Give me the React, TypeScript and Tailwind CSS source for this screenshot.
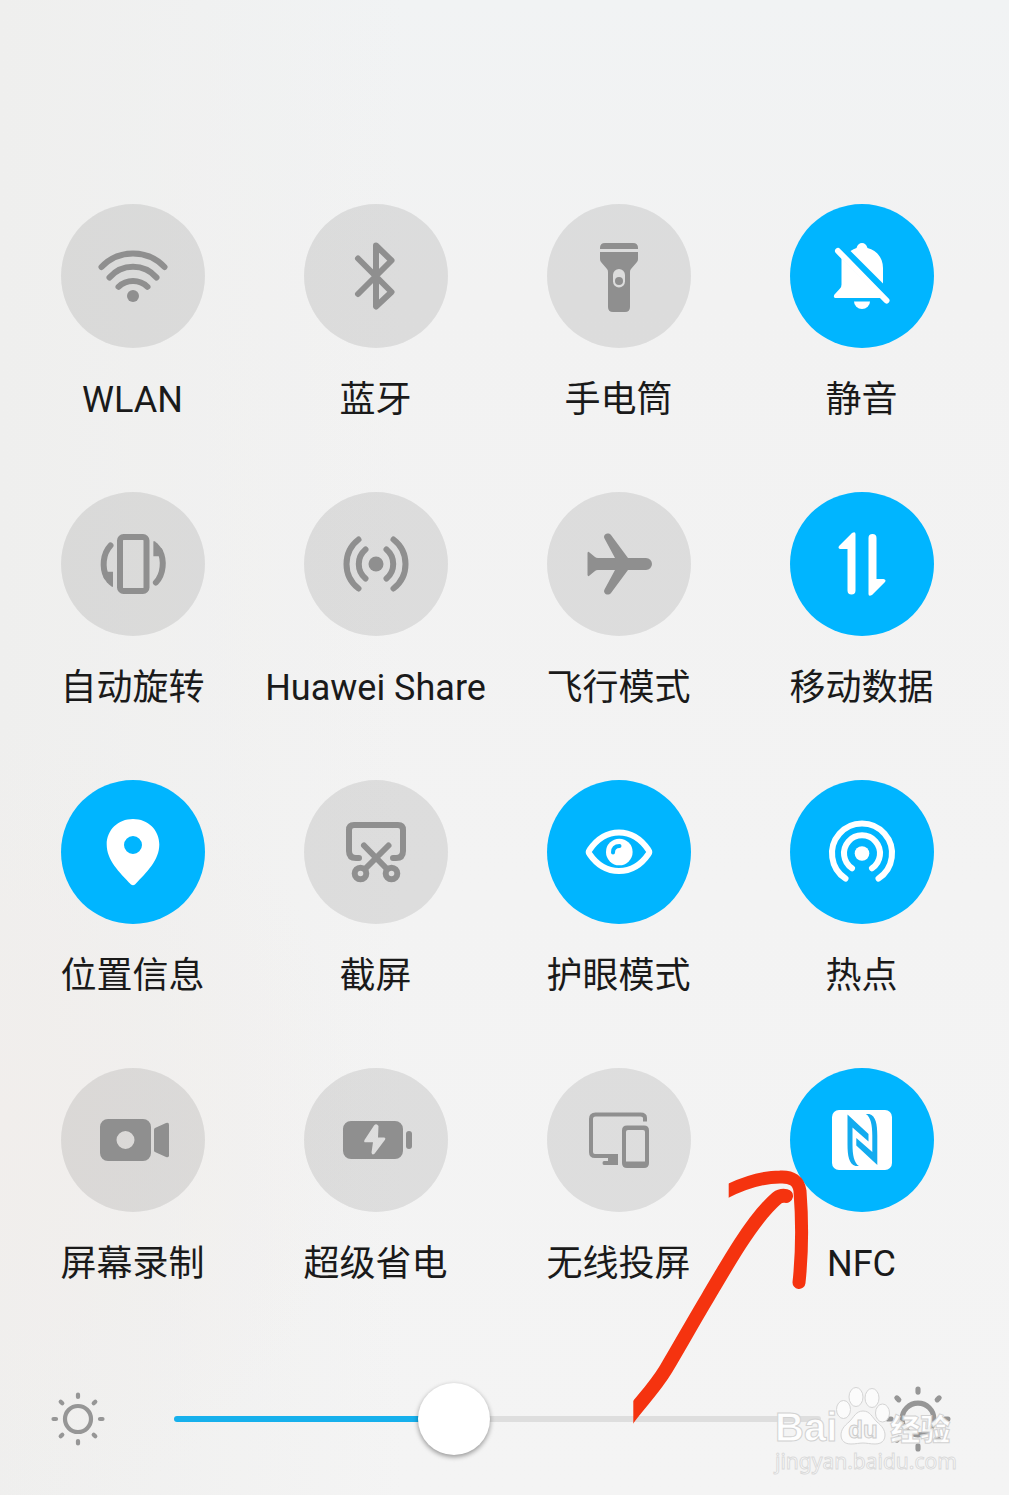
import React, { useState } from "react";

interface Tile {
  label: string;
  active?: boolean;
  icon: React.ReactNode;
}

const strokeProps = {
  fill: "none",
  stroke: "currentColor",
  strokeWidth: 6,
  strokeLinecap: "round" as const,
  strokeLinejoin: "round" as const,
};

// All icons are drawn on the same 144x144 canvas as the round button
const initialTiles: Tile[] = [
  {
    label: "WLAN",
    icon: (
      <>
        <g {...strokeProps}>
          <path d="M40.5 63a43.5 43.5 0 0 1 63 0" />
          <path d="M48.5 73.5a31 31 0 0 1 47 0" />
          <path d="M57.5 82.8a21 21 0 0 1 29 0" />
        </g>
        <circle cx="72" cy="92" r="6" />
      </>
    ),
  },
  {
    label: "蓝牙",
    icon: <path {...strokeProps} d="M54 54.5 87.5 88 72 102.5V41.5L87.5 56.5 54 90" />,
  },
  {
    label: "手电筒",
    icon: (
      <>
        <path d="M58 39h28q5 0 5 5v1H53v-1q0-5 5-5z" />
        <path
          fillRule="evenodd"
          d="M53 48h38v7q0 2-1 3l-6 7q-1 1-1 3v35q0 5-5 5H66q-5 0-5-5V68q0-2-1-3l-6-7q-1-1-1-3zM72 65a6 6 0 0 0-6 6v6.5a6 6 0 0 0 12 0V71a6 6 0 0 0-6-6z"
        />
        <circle cx="72" cy="77" r="4" />
      </>
    ),
  },
  {
    label: "静音",
    active: true,
    icon: (
      <>
        <path d="M60.5 47c2-1.5 4-2.5 6-3 1-3.5 3-5 5.5-5s4.5 1.5 5.5 5C87 46.5 93 54 93 64v15.5z" />
        <path d="M51.5 54 91 94H46c-2.5 0-2.5-2-1.5-3.5l5.5-6q1.5-1.5 1.5-4z" />
        <path d="M64 97.5h16a8 7.5 0 0 1-16 0z" />
        <path {...strokeProps} d="M48 47l48.5 49.5" />
      </>
    ),
  },
  {
    label: "自动旋转",
    icon: (
      <>
        <rect {...strokeProps} x="59" y="45" width="26.5" height="54" rx="3.5" />
        <g id="turn">
          <path {...strokeProps} d="M49.5 53.5C41.5 62 41 76 45.5 85" />
          <path d="M46 79.7h6V94q0 1.500-1.500.5C47 92 44 88.500 42.500 85z" />
        </g>
        <use href="#turn" transform="rotate(180 72.2 72)" />
      </>
    ),
  },
  {
    label: "Huawei Share",
    icon: (
      <>
        <circle cx="72" cy="72" r="7.5" />
        <g {...strokeProps}>
          <path d="M61.5 57.5a19 19 0 0 0 0 29M82.5 57.5a19 19 0 0 1 0 29" />
          <path d="M54.5 47.5a31 31 0 0 0 0 49M89.5 47.5a31 31 0 0 1 0 49" />
        </g>
      </>
    ),
  },
  {
    label: "飞行模式",
    icon: (
      <path d="M40.5 61q.5-2 2-.5L48 65q1 1 3 1h17L57.5 46.5c-2-4 3.5-7 6.5-3.5L81 66h18a6 6 0 0 1 0 12H81L64 101c-3 3.5-8.5.5-6.5-3.5L68 78H51q-2 0-3 1l-5.5 4.5q-1.5 1.5-2-.5z" />
    ),
  },
  {
    label: "移动数据",
    active: true,
    icon: (
      <>
        <path d="M62 41q3.5-2 3.5 1v56.5a4 4 0 0 1-8 0V57h-7q-3-.5-1.5-3z" />
        <path d="M82 103q-3.5 2-3.5-1V46a4 4 0 0 1 8 0v41h7q3 .5 1.5 3z" />
      </>
    ),
  },
  {
    label: "位置信息",
    active: true,
    icon: (
      <path
        fillRule="evenodd"
        d="M72 39c15 0 26.3 11 26.3 25.5C98.3 80 86 92 74 104.5q-2 1.5-4 0C58 92 45.7 80 45.7 64.5 45.7 50 57 39 72 39zM72 56a9 9 0 1 0 0 18 9 9 0 0 0 0-18z"
      />
    ),
  },
  {
    label: "截屏",
    icon: (
      <g {...strokeProps}>
        <path d="M55 78h-3q-7 0-7-7V50q0-5 5-5h44q5 0 5 5v21q0 7-7 7h-3" />
        <path d="M60 65.5 83 89M84.5 65.5 61 89" />
        <circle cx="56.5" cy="93.5" r="5.8" />
        <circle cx="87.5" cy="93.5" r="5.8" />
      </g>
    ),
  },
  {
    label: "护眼模式",
    active: true,
    icon: (
      <>
        <path
          {...strokeProps}
          d="M42.5 70C50 59 60 52.5 72 52.5S94 59 101.5 70q1.5 2 0 4C94 85 84 91 72 91S50 85 42.5 74q-1.5-2 0-4z"
        />
        <circle cx="72.3" cy="72" r="13.3" />
        <path d="M66 72.5q0-6.5 6.5-6.5" fill="none" stroke="#00b5ff" strokeWidth="4" strokeLinecap="round" />
      </>
    ),
  },
  {
    label: "热点",
    active: true,
    icon: (
      <>
        <circle cx="72" cy="73.5" r="7.3" />
        <g {...strokeProps}>
          <path d="M62 88.3a18 18 0 1 1 20 0" />
          <path d="M55.5 98.5a30 30 0 1 1 33 0" />
        </g>
      </>
    ),
  },
  {
    label: "屏幕录制",
    icon: (
      <>
        <path
          fillRule="evenodd"
          d="M47 51h35a8 8 0 0 1 8 8v26a8 8 0 0 1-8 8H47a8 8 0 0 1-8-8V59a8 8 0 0 1 8-8zM64.5 63a9 9 0 1 0 0 18 9 9 0 0 0 0-18z"
        />
        <path d="M93 61.5q0-1 1-1.5l11-5q3-1 3 1.5v31q0 2.5-3 1.5l-11-5q-1-.5-1-1.5z" />
      </>
    ),
  },
  {
    label: "超级省电",
    icon: (
      <>
        <path
          fillRule="evenodd"
          d="M47 53h44a8 8 0 0 1 8 8v22a8 8 0 0 1-8 8H47a8 8 0 0 1-8-8V61a8 8 0 0 1 8-8zM70 57.5 60.5 72q-1 2.3 1 2.3h7.5L67.5 84.5q.5 3 3 1.2l10.5-14q1-2-1-2.2H74L74.5 58q-2-3-4.5-.5z"
        />
        <rect x="102" y="63" width="6" height="18" rx="3" />
      </>
    ),
  },
  {
    label: "无线投屏",
    icon: (
      <>
        <path
          {...strokeProps}
          strokeWidth="4"
          strokeLinecap="butt"
          d="M71 88H48q-4 0-4-4V51q0-4.5 4.5-4.5h45Q98 46.5 98 50v3.5"
        />
        <path d="M61 88h10v9H57q-1.5 0-1.5-2t1.5-2h4z" />
        <path
          fillRule="evenodd"
          d="M80 57.5h17q5 0 5 5V95q0 5-5 5H80q-5 0-5-5V62.5q0-5 5-5zM81 62q-2 0-2 2v29.5h19V64q0-2-2-2z"
        />
      </>
    ),
  },
  {
    label: "NFC",
    active: true,
    icon: (
      <>
        <rect x="42" y="42" width="60" height="60" rx="7" />
        <g fill="#12abef">
          <path d="M57.5 46.5 78.5 66v7.5L62.5 59.5V76c0 11 1.5 19 6.5 22H65.5c-6.5-2-8-10-8-22z" />
          <path d="M87.3 97 66.3 77.5V70L82.3 84V68c0-11-1.5-19-6.5-22h3.5c6.5 2 8 10 8 22z" />
        </g>
      </>
    ),
  },
];

const SunIcon: React.FC<{ className: string }> = ({ className }) => (
  <svg viewBox="0 0 54 54" className={className} aria-hidden="true">
    <g fill="none" stroke="currentColor" strokeWidth="4.2" strokeLinecap="round">
      <circle cx="27" cy="27" r="13" />
      <path d="M27 2.5V5M27 49v2.5M2.5 27H5M49 27h2.5M9.7 9.7l1.6 1.6M42.7 42.7l1.6 1.6M9.7 44.3l1.6-1.6M42.7 11.3l1.6-1.6" />
    </g>
  </svg>
);

// Hand drawn pointer that leads to the NFC switch
const RedArrow = () => (
  <svg
    viewBox="0 0 200 270"
    className="pointer-events-none absolute top-[92px] -left-[170px] z-10 h-[270px] w-[200px]"
    aria-hidden="true"
  >
    <clipPath id="shaft-clip">
      <path d="M13.3 0H200V270H13.3z" />
    </clipPath>
    <clipPath id="head-clip">
      <path d="M108.7 0H200V270H108.7z" />
    </clipPath>
    <g fill="none" stroke="#f5330f" strokeLinecap="round" strokeLinejoin="round">
      <path
        clipPath="url(#shaft-clip)"
        strokeWidth="14"
        d="M4 264C20 242 34 229 46 209C62 182 73 162 88 137C98 120 109 101 120 84C131 67 143 50 157 38Q161 35 166 36"
      />
      <path
        clipPath="url(#head-clip)"
        strokeWidth="13"
        d="M98 36C118 25 140 17 160 17Q178 16 180 31C182 57 183 85 179 122.5"
      />
    </g>
  </svg>
);

const Watermark = () => (
  <div className="pointer-events-none absolute right-[54px] -bottom-[22px] w-[180px] text-white/90">
    <div className="flex h-[60px] items-end">
      <span className="font-['Liberation_Sans',sans-serif] text-[40px] leading-9 font-bold [-webkit-text-stroke:1px_#d2d2d2]">
        Bai
      </span>
      <svg viewBox="0 0 54 58" className="-ml-px h-[58px] w-[54px] shrink-0" aria-hidden="true">
        <g fill="#fbfbfb" stroke="#d4d4d4" strokeWidth="1">
          <ellipse cx="7.5" cy="22.5" rx="7" ry="9" />
          <ellipse cx="20" cy="10" rx="7" ry="9.5" />
          <ellipse cx="36" cy="11" rx="7" ry="9.5" />
          <ellipse cx="46.5" cy="26" rx="7" ry="9" />
          <path d="M27 24c7 0 9 6 14 11 5 4 8 8 8 13 0 6-4 9-10 9-5 0-8-1-12-1s-7 1-12 1C9 57 5 54 5 48c0-5 3-9 8-13 5-5 7-11 14-11z" />
        </g>
        <text
          x="27"
          y="51"
          textAnchor="middle"
          fill="#f4f4f4"
          stroke="#cccccc"
          className="font-['Liberation_Sans',sans-serif] text-[24px] font-bold"
        >
          du
        </text>
      </svg>
      <span className="font-['Noto_Sans_CJK_SC',sans-serif] text-[30px] leading-9 font-black whitespace-nowrap [-webkit-text-stroke:1px_#d2d2d2]">
        经验
      </span>
    </div>
    <p className="font-['Noto_Sans',sans-serif] text-[21px] leading-8 [-webkit-text-stroke:1px_#dadada]">
      jingyan.baidu.com
    </p>
  </div>
);

const App: React.FC = () => {
  const [tiles, setTiles] = useState(initialTiles);
  const [brightness, setBrightness] = useState(108);

  const toggleTile = (label: string) => {
    setTiles(tiles.map((tile) => (tile.label === label ? { ...tile, active: !tile.active } : tile)));
  };

  // the thumb is wider than the track ends, so the fill stays between 6% and 94%
  const fill = `${(brightness / 255) * 88 + 6}%`;

  return (
    <main className="min-h-screen overflow-hidden bg-[#f2f2f2] bg-[radial-gradient(ellipse_at_0%_75%,#f1eeec,transparent_25%),linear-gradient(to_right,#efefee,transparent_40%),linear-gradient(to_bottom,#f1f3f4,#f2f2f2_20%,#f4f4f4)] pt-[204px] pb-10 font-['Roboto','Noto_Sans_CJK_SC',sans-serif]">
      <div className="grid grid-cols-4 gap-y-18 pr-[26px] pl-[11px]">
        {tiles.map((tile) => (
          <div key={tile.label} className="flex flex-col items-center gap-8">
            <div className="relative">
              <button
                type="button"
                aria-label={tile.label}
                aria-pressed={!!tile.active}
                onClick={() => toggleTile(tile.label)}
                className={`block size-36 rounded-full ${
                  tile.active ? "bg-[#00b5ff] text-white" : "bg-black/9 text-[#8f8f8f]"
                }`}
              >
                <svg viewBox="0 0 144 144" fill="currentColor" className="size-36" aria-hidden="true">
                  {tile.icon}
                </svg>
              </button>
              {tile.label === "NFC" && <RedArrow />}
            </div>
            <span className="text-[36px] leading-10 whitespace-nowrap text-[#1a1a1a]">{tile.label}</span>
          </div>
        ))}
      </div>

      <div className="relative mt-[99px] flex h-18 items-center pr-[58px] pl-[51px] text-[#969696]">
        <SunIcon className="size-[54px] shrink-0" />
        <input
          type="range"
          aria-label="亮度"
          min={0}
          max={255}
          value={brightness}
          onChange={(e) => setBrightness(Number(e.target.value))}
          style={{ "--fill": fill } as React.CSSProperties}
          className="mr-16 ml-[69px] h-18 min-w-0 flex-1 cursor-pointer appearance-none bg-transparent [&::-webkit-slider-runnable-track]:h-1.5 [&::-webkit-slider-runnable-track]:rounded-full [&::-webkit-slider-runnable-track]:bg-[linear-gradient(to_right,#16b0ec_var(--fill),#dedede_var(--fill))] [&::-webkit-slider-thumb]:-mt-[33px] [&::-webkit-slider-thumb]:size-18 [&::-webkit-slider-thumb]:appearance-none [&::-webkit-slider-thumb]:rounded-full [&::-webkit-slider-thumb]:bg-white [&::-webkit-slider-thumb]:shadow-[0_2px_5px_rgba(0,0,0,0.4)]"
        />
        <SunIcon className="size-[66px] shrink-0" />
        <Watermark />
      </div>
    </main>
  );
};

export default App;
